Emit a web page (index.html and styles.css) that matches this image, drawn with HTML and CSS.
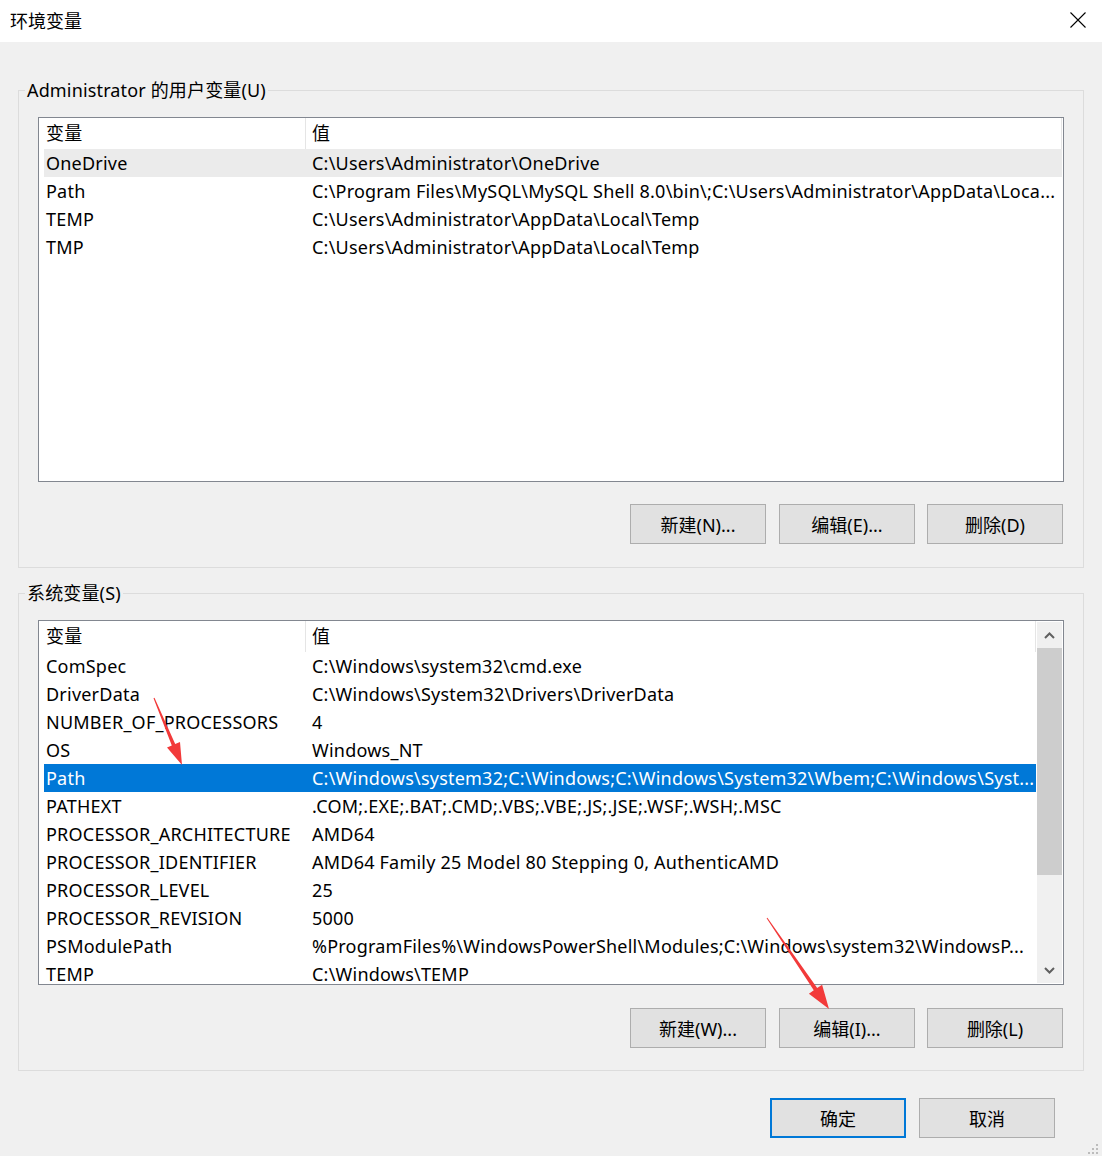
FILE: index.html
```html
<!DOCTYPE html>
<html lang="zh-CN">
<head>
<meta charset="utf-8">
<title>环境变量</title>
<link rel="stylesheet" href="styles.css">
</head>
<body>
<div class="window">
  <header class="titlebar">
    <span class="title">环境变量</span>
    <button class="close" aria-label="关闭">
      <svg width="16" height="16" viewBox="0 0 16 16"><path d="M0.5 0.5L15.5 15.5M15.5 0.5L0.5 15.5" stroke="#000" stroke-width="1.1" fill="none"/></svg>
    </button>
  </header>

  <main class="content">
    <fieldset class="group">
      <legend>Administrator 的用户变量(U)</legend>
      <div class="list">
        <div class="list-body">
          <div class="list-head"><span class="c1">变量</span><span class="c2">值</span></div>
          <div class="row hover"><span class="c1">OneDrive</span><span class="c2">C:\Users\Administrator\OneDrive</span></div>
          <div class="row"><span class="c1">Path</span><span class="c2">C:\Program Files\MySQL\MySQL Shell 8.0\bin\;C:\Users\Administrator\AppData\Loca...</span></div>
          <div class="row"><span class="c1">TEMP</span><span class="c2">C:\Users\Administrator\AppData\Local\Temp</span></div>
          <div class="row"><span class="c1">TMP</span><span class="c2">C:\Users\Administrator\AppData\Local\Temp</span></div>
        </div>
      </div>
      <div class="actions">
        <button class="btn">新建(N)...</button>
        <button class="btn">编辑(E)...</button>
        <button class="btn">删除(D)</button>
      </div>
    </fieldset>

    <fieldset class="group group-sys">
      <legend>系统变量(S)</legend>
      <div class="list">
        <div class="list-body">
          <div class="list-head"><span class="c1">变量</span><span class="c2">值</span></div>
          <div class="row"><span class="c1">ComSpec</span><span class="c2">C:\Windows\system32\cmd.exe</span></div>
          <div class="row"><span class="c1">DriverData</span><span class="c2">C:\Windows\System32\Drivers\DriverData</span></div>
          <div class="row"><span class="c1">NUMBER_OF_PROCESSORS</span><span class="c2">4</span></div>
          <div class="row"><span class="c1">OS</span><span class="c2">Windows_NT</span></div>
          <div class="row selected"><span class="c1">Path</span><span class="c2">C:\Windows\system32;C:\Windows;C:\Windows\System32\Wbem;C:\Windows\Syst...</span></div>
          <div class="row"><span class="c1">PATHEXT</span><span class="c2">.COM;.EXE;.BAT;.CMD;.VBS;.VBE;.JS;.JSE;.WSF;.WSH;.MSC</span></div>
          <div class="row"><span class="c1">PROCESSOR_ARCHITECTURE</span><span class="c2">AMD64</span></div>
          <div class="row"><span class="c1">PROCESSOR_IDENTIFIER</span><span class="c2">AMD64 Family 25 Model 80 Stepping 0, AuthenticAMD</span></div>
          <div class="row"><span class="c1">PROCESSOR_LEVEL</span><span class="c2">25</span></div>
          <div class="row"><span class="c1">PROCESSOR_REVISION</span><span class="c2">5000</span></div>
          <div class="row"><span class="c1">PSModulePath</span><span class="c2">%ProgramFiles%\WindowsPowerShell\Modules;C:\Windows\system32\WindowsP...</span></div>
          <div class="row"><span class="c1">TEMP</span><span class="c2">C:\Windows\TEMP</span></div>
        </div>
        <div class="scrollbar">
          <div class="sb-btn">
            <svg width="11" height="7" viewBox="0 0 11 7"><path d="M1 6L5.5 1.5L10 6" stroke="#606060" stroke-width="2" fill="none"/></svg>
          </div>
          <div class="sb-thumb"></div>
          <div class="sb-track"></div>
          <div class="sb-btn">
            <svg width="11" height="7" viewBox="0 0 11 7"><path d="M1 1L5.5 5.5L10 1" stroke="#606060" stroke-width="2" fill="none"/></svg>
          </div>
        </div>
      </div>
      <div class="actions">
        <button class="btn">新建(W)...</button>
        <button class="btn">编辑(I)...</button>
        <button class="btn">删除(L)</button>
      </div>
    </fieldset>

    <div class="dialog-actions">
      <button class="btn btn-primary">确定</button>
      <button class="btn">取消</button>
    </div>
  </main>

  <!-- red callout arrows drawn on top of the dialog -->
  <svg class="marks" width="1102" height="1156" viewBox="0 0 1102 1156">
    <polygon fill="#f23a3a" points="154.5,697.8 175.2,744 180,742 182,765 167,747.4 171.8,745.4 153.5,698.2"/>
    <polygon fill="#f23a3a" points="767.4,917.7 817.2,988.1 822.1,984.7 829,1009 808.9,993.7 813.8,990.3 766.6,918.3"/>
  </svg>

  <!-- size grip -->
  <svg class="grip" width="12" height="12" viewBox="0 0 12 12">
    <g fill="#bcbcbc">
      <rect x="8" y="0" width="2" height="2"/>
      <rect x="4" y="4" width="2" height="2"/>
      <rect x="8" y="4" width="2" height="2"/>
      <rect x="0" y="8" width="2" height="2"/>
      <rect x="4" y="8" width="2" height="2"/>
      <rect x="8" y="8" width="2" height="2"/>
    </g>
  </svg>
</div>
</body>
</html>
```

FILE: styles.css
```css
* {
  box-sizing: border-box;
}

html,
body {
  margin: 0;
  padding: 0;
}

body {
  width: 1102px;
  height: 1156px;
  overflow: hidden;
  background: #f0f0f0;
  font-family: "Noto Sans", "Noto Sans CJK SC", sans-serif;
  font-size: 18px;
  color: #000;
}

.window {
  position: relative;
  width: 1102px;
  height: 1156px;
}

/* title bar */
.titlebar {
  height: 42px;
  background: #fff;
  display: flex;
  align-items: center;
  justify-content: space-between;
  padding-left: 10px;
}

.title {
  font-size: 18px;
  line-height: 24px;
}

.close {
  width: 16px;
  height: 16px;
  margin: 0 16px 2px 0;
  padding: 0;
  border: 0;
  background: none;
  display: flex;
}

/* dialog body */
.content {
  padding: 36px 18px 0;
}

.group {
  margin: 0;
  padding: 0 19px 23px;
  border: 1px solid #dcdcdc;
  min-width: 0;
}

.group legend {
  margin-left: -13px;
  padding: 0 2px;
  font-size: 18px;
  line-height: 24px;
  letter-spacing: 0.15px;
}

.group-sys {
  margin-top: 13px;
  padding-bottom: 22px;
}

/* list view */
.list {
  margin-top: 15px;
  height: 365px;
  border: 1px solid #828790;
  background: #fff;
  display: flex;
  overflow: hidden;
  letter-spacing: 0.22px;
}

.list-body {
  flex: 1;
  min-width: 0;
  padding: 0 1px 0 5px;
}

.list-head,
.row {
  display: flex;
  white-space: nowrap;
}

.list-head {
  height: 31px;
  line-height: 30px;
}

.row {
  height: 28px;
  line-height: 28px;
}

.c1 {
  flex: none;
  width: 262px;
  padding-left: 2px;
  overflow: hidden;
}

.c2 {
  flex: 1;
  min-width: 0;
  padding-left: 6px;
  overflow: hidden;
}

.list-head .c1,
.list-head .c2 {
  border-right: 1px solid #e5e5e5;
}

.row.hover {
  background: #ebebeb;
}

.row.selected {
  background: #0078d7;
  color: #fff;
}

/* vertical scrollbar */
.scrollbar {
  flex: none;
  width: 25px;
  margin: 1px 1px 1px 0;
  background: #f0f0f0;
  display: flex;
  flex-direction: column;
}

.sb-btn {
  height: 26px;
  display: flex;
  align-items: center;
  justify-content: center;
}

.sb-thumb {
  height: 227px;
  background: #cdcdcd;
}

.sb-track {
  flex: 1;
}

/* buttons */
.actions {
  margin-top: 22px;
  display: flex;
  justify-content: flex-end;
  gap: 12px;
  padding-right: 1px;
}

.group-sys .actions {
  margin-top: 23px;
}

.actions .btn:first-child {
  margin-right: 1px;
}

.btn {
  width: 136px;
  height: 40px;
  padding: 0;
  border: 1px solid #adadad;
  background: #e1e1e1;
  font-family: inherit;
  font-size: 18px;
  color: #000;
}

.btn-primary {
  border: 2px solid #0078d7;
}

.dialog-actions {
  margin-top: 27px;
  display: flex;
  justify-content: flex-end;
  gap: 13px;
  padding-right: 29px;
}

/* overlays */
.marks {
  position: absolute;
  left: 0;
  top: 0;
  pointer-events: none;
}

.grip {
  position: absolute;
  right: 2px;
  bottom: 0;
}
```
